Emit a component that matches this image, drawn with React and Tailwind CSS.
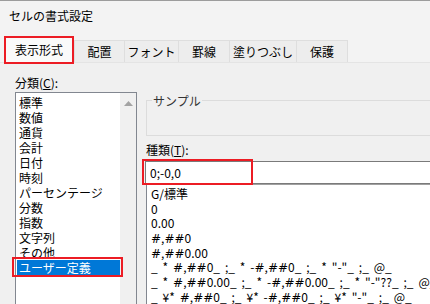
import React from 'react';

const categories = [
  '標準',
  '数値',
  '通貨',
  '会計',
  '日付',
  '時刻',
  'パーセンテージ',
  '分数',
  '指数',
  '文字列',
  'その他',
  'ユーザー定義',
];

const formats = [
  'G/標準',
  '0',
  '0.00',
  '#,##0',
  '#,##0.00',
  '_ * #,##0_ ;_ * -#,##0_ ;_ * "-"_ ;_ @_',
  '_ * #,##0.00_ ;_ * -#,##0.00_ ;_ * "-"??_ ;_ @_',
  '_ ¥* #,##0_ ;_ ¥* -#,##0_ ;_ ¥* "-"_ ;_ @_',
];

const tabs = [
  { label: '配置', w: 'w-[51px]' },
  { label: 'フォント', w: 'w-[55px]' },
  { label: '罫線', w: 'w-[52px]' },
  { label: '塗りつぶし', w: 'w-[68px]' },
  { label: '保護', w: 'w-[52px]' },
];

// the dialog font draws '#' much wider than the CJK font does
function FormatText({ text }) {
  const parts = text.split('#');
  return parts.map((p, i) => (
    <React.Fragment key={i}>
      {i > 0 && <span className="font-['DejaVu_Sans',sans-serif]">#</span>}
      {p}
    </React.Fragment>
  ));
}

export default function App() {
  return (
    <div className="relative w-[430px] h-[304px] overflow-hidden bg-[#f0f0f0] text-[12px] text-black font-['Noto_Sans_CJK_JP',sans-serif]">
      {/* title */}
      <div className="h-[31px] border-t border-[#9c9c9c] bg-[#f3f3f3] pl-[9px] flex items-center leading-none">
        セルの書式設定
      </div>

      {/* tabs */}
      <div className="h-[32px] bg-[#f3f3f3] flex items-end pl-[4px] border-b border-[#e4e4e4]">
        <div className="h-[28px] w-[70px] border-2 border-[#ec1c24] bg-[#fafafa] flex items-center justify-center leading-none -mb-[2px] mr-[1px]">
          表示形式
        </div>
        {tabs.map(t => (
          <div
            key={t.label}
            className={`${t.w} h-[22px] border border-b-0 border-[#dedede] -ml-px first:ml-0 bg-[#ededed] flex items-center justify-center leading-none`}
          >
            {t.label}
          </div>
        ))}
      </div>

      {/* content */}
      <div className="flex pt-[11px] pl-[15px]">
        <div className="w-[122px] shrink-0">
          <div className="h-[17px] leading-[17px]">
            分類(<span className="underline">C</span>):
          </div>
          <div className="mt-[1px] h-[260px] border border-[#828790] bg-white flex">
            <div className="flex-1 pt-[2px]">
              {categories.map(c => (
                <div
                  key={c}
                  className={`ml-[1px] pl-[2px] h-[15px] leading-[15px] whitespace-nowrap ${
                    c === 'ユーザー定義' ? 'bg-[#0078d7] text-white' : ''
                  }`}
                >
                  {c}
                </div>
              ))}
            </div>
            <div className="w-[16px] bg-[#f0f0f0] flex justify-center pt-[8px]">
              <svg width="9" height="5" viewBox="0 0 9 5">
                <path d="M0 5 L4.5 0 L9 5 Z" fill="#a3a3a3" />
              </svg>
            </div>
          </div>
        </div>

        <div className="ml-[9px] w-[300px] shrink-0">
          <div className="relative mt-[26px] h-[36px] border border-[#dcdcdc]">
            <span className="absolute -top-[9px] left-[5px] bg-[#f0f0f0] px-[1px] leading-[17px] text-[#333]">
              サンプル
            </span>
          </div>
          <div className="mt-[5px] h-[17px] leading-[17px]">
            種類(<span className="underline">T</span>):
          </div>
          <div className="mt-[3px] -ml-px h-[23px] border border-[#7a7a7a] bg-white pl-[4px] flex items-center leading-none">
            0;-0,0
          </div>
          <div className="h-[140px] border border-[#828790] border-t-[#a0a0a0] bg-white pt-[2px] pl-[4px]">
            {formats.map(f => (
              <div key={f} className="h-[14.7px] leading-[14.7px] whitespace-pre [word-spacing:2.2px]">
                <FormatText text={f} />
              </div>
            ))}
          </div>
        </div>
      </div>

      {/* annotation boxes */}
      <div className="absolute left-[12px] top-[257px] w-[111px] h-[20px] border-2 border-[#ec1c24]" />
      <div className="absolute left-[142px] top-[159px] w-[111px] h-[26px] border-2 border-[#ec1c24]" />
    </div>
  );
}
